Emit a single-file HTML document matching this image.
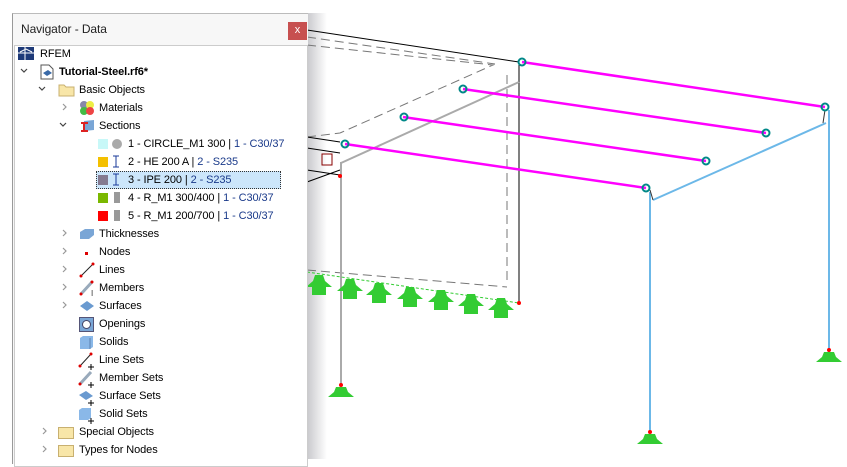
<!DOCTYPE html>
<html><head><meta charset="utf-8"><style>
body{margin:0;width:847px;height:459px;overflow:hidden;background:#fff;font-family:"Liberation Sans",sans-serif;font-size:11px;letter-spacing:-0.1px;color:#000;position:relative}
#shadow{position:absolute;left:307px;top:13px;width:20px;height:446px;background:linear-gradient(to right,#c8c8cc,#fff)}
#panel{position:absolute;left:12px;top:13px;width:295px;height:450px;background:#f7f7f7;border-left:1px solid #999;border-top:1px solid #bbb}
#title{position:absolute;left:8px;top:8px;font-size:12px;color:#222}
#close{position:absolute;left:275px;top:8px;width:19px;height:18px;background:#c75050;color:#fff;font-size:11px;text-align:center;line-height:17px}
#tree{position:absolute;left:1px;top:31px;width:292px;height:420px;background:#fff;border:1px solid #ccc}
.r{position:absolute;height:18px;line-height:18px;white-space:nowrap}
.c{color:#1a3a8a}
svg.ic{position:absolute}
</style></head><body>
<div id="shadow"></div>
<svg width="847" height="459" style="position:absolute;left:0;top:0">
<g fill="none" stroke-width="1">
<path d="M307 30 L519 62" stroke="#000"/>
<path d="M307 37 L495 64 M307 45 L493 65 L340 133 M507 75 L507 285 M307 270 L507 287 M307 137 L340 133" stroke="#777" stroke-dasharray="9 5"/>
<path d="M307 137 L340 142 M307 148 L340 153 M307 170 L340 175 M307 182 L340 170" stroke="#000"/>
<path d="M519 62 L519 303" stroke="#000"/>
<path d="M341 163 L519 82" stroke="#aaa" stroke-width="2"/>
<path d="M341 162 L341 385" stroke="#aaa" stroke-width="2"/>
<path d="M307 272 L519 303" stroke="#3c3" stroke-dasharray="3 2"/>
<path d="M522 62 L825 107 M463 89 L766 133 M403 117 L706 161 M345 144 L646 188" stroke="#f0f" stroke-width="2.5"/>
<path d="M653 200 L826 123 M829 110 L829 352 M650 192 L650 432" stroke="#6cb8e8" stroke-width="2"/>
<path d="M825 110 L823 123 M650 190 L653 200" stroke="#333"/>
<rect x="322" y="154" width="10" height="11" stroke="#800"/>
</g>
<g fill="none" stroke="#088" stroke-width="2">
<circle cx="522" cy="62" r="3.5"/><circle cx="463" cy="89" r="3.5"/><circle cx="404" cy="117" r="3.5"/><circle cx="345" cy="144" r="3.5"/>
<circle cx="825" cy="107" r="3.5"/><circle cx="766" cy="133" r="3.5"/><circle cx="706" cy="161" r="3.5"/><circle cx="646" cy="188" r="3.5"/>
</g>
<g fill="#f00"><circle cx="519" cy="303" r="2"/><circle cx="340" cy="176" r="2"/><circle cx="341" cy="385" r="2"/><circle cx="650" cy="432" r="2"/><circle cx="829" cy="350" r="2"/></g>
<g fill="#3c3">
<path d="M336 387h10l2 5 6 5h-26l6-5z"/><path d="M645 434h10l2 5 6 5h-26l6-5z"/><path d="M824 352h10l2 5 6 5h-26l6-5z"/>
<path d="M315 275h8l2 6 7 6h-26l7-6z M312 287h14v8h-14z"/>
<path d="M346 279h8l2 6 7 6h-26l7-6z M343 291h14v8h-14z"/>
<path d="M375 283h8l2 6 7 6h-26l7-6z M372 295h14v8h-14z"/>
<path d="M406 287h8l2 6 7 6h-26l7-6z M403 299h14v8h-14z"/>
<path d="M437 290h8l2 6 7 6h-26l7-6z M434 302h14v8h-14z"/>
<path d="M467 294h8l2 6 7 6h-26l7-6z M464 306h14v8h-14z"/>
<path d="M497 298h8l2 6 7 6h-26l7-6z M494 310h14v8h-14z"/>
</g>
</svg>
<div id="panel">
<div id="title">Navigator - Data</div>
<div id="close">x</div>
<div id="tree"></div>
</div>
<svg width="847" height="459" style="position:absolute;left:0;top:0" fill="none" stroke-width="1.2">
<g stroke="#444"><path d="M21 69l3 3 3-3M39 87l3 3 3-3M60 123l3 3 3-3"/></g>
<g stroke="#999"><path d="M63 104l3 3-3 3M63 230l3 3-3 3M63 248l3 3-3 3M63 266l3 3-3 3M63 284l3 3-3 3M63 302l3 3-3 3M43 428l3 3-3 3M43 446l3 3-3 3"/></g>
</svg>
<div style="position:absolute;left:0;top:0">
<svg class="ic" style="left:18px;top:47px" width="16" height="13"><rect width="16" height="13" fill="#1e3a78"/><path d="M0 6h16M7 0v13" stroke="#fff"/><path d="M2 5l6-3 6 3" stroke="#fff" fill="none"/></svg>
<div class="r" style="left:40px;top:45px">RFEM</div>
<svg class="ic" style="left:40px;top:64px" width="14" height="16"><path d="M1 1h8l4 4v10H1z" fill="#fff" stroke="#555"/><path d="M3 9l5-3 4 3-5 3z" fill="#3a6aa8"/></svg>
<div class="r" style="left:59px;top:63px;font-weight:bold">Tutorial-Steel.rf6*</div>
<svg class="ic" style="left:58px;top:83px" width="17" height="14"><path d="M1 2h5l2 2h8v9H1z" fill="#f8e6a8" stroke="#c8b070"/></svg>
<div class="r" style="left:79px;top:81px">Basic Objects</div>
<svg class="ic" style="left:79px;top:100px" width="16" height="16"><circle cx="5" cy="5" r="4" fill="#88a"/><circle cx="11" cy="5" r="4" fill="#ee4"/><circle cx="5" cy="11" r="4" fill="#4b4"/><circle cx="11" cy="11" r="4" fill="#e44"/></svg>
<div class="r" style="left:99px;top:99px">Materials</div>
<svg class="ic" style="left:80px;top:119px" width="16" height="14"><path d="M4 2l10-1v10l-10 1z" fill="#7aa6d6"/><path d="M1 4h7M4 4v8M1 12h7" stroke="#d22" stroke-width="2"/></svg>
<div class="r" style="left:99px;top:117px">Sections</div>
<div style="position:absolute;left:98px;top:139px;width:10px;height:10px;background:#c8f8f8"></div><div style="position:absolute;left:112px;top:139px;width:10px;height:10px;border-radius:50%;background:#aaa"></div>
<div class="r" style="left:128px;top:135px">1 - CIRCLE_M1 300 | <span class="c">1 - C30/37</span></div>
<div style="position:absolute;left:98px;top:157px;width:10px;height:10px;background:#f4c000"></div><svg class="ic" style="left:112px;top:155px" width="8" height="13"><path d="M1 1h6M4 1v11M1 12h6" stroke="#1a3a9a"/></svg>
<div class="r" style="left:128px;top:153px">2 - HE 200 A | <span class="c">2 - S235</span></div>
<div style="position:absolute;left:96px;top:171px;width:183px;height:16px;background:#cce6fb;border:1px dotted #333"></div>
<div style="position:absolute;left:98px;top:175px;width:10px;height:10px;background:#857a90"></div><svg class="ic" style="left:112px;top:173px" width="8" height="13"><path d="M1 1h6M4 1v11M1 12h6" stroke="#1a3a9a"/></svg>
<div class="r" style="left:128px;top:171px">3 - IPE 200 | <span class="c">2 - S235</span></div>
<div style="position:absolute;left:98px;top:193px;width:10px;height:10px;background:#7ab800"></div><div style="position:absolute;left:114px;top:192px;width:6px;height:11px;background:#999"></div>
<div class="r" style="left:128px;top:189px">4 - R_M1 300/400 | <span class="c">1 - C30/37</span></div>
<div style="position:absolute;left:98px;top:211px;width:10px;height:10px;background:#f00"></div><div style="position:absolute;left:114px;top:210px;width:6px;height:11px;background:#999"></div>
<div class="r" style="left:128px;top:207px">5 - R_M1 200/700 | <span class="c">1 - C30/37</span></div>
<svg class="ic" style="left:79px;top:228px" width="16" height="12"><path d="M1 4l5-3h9v6l-5 4H1z" fill="#7aa6d6"/></svg><div class="r" style="left:99px;top:225px">Thicknesses</div>
<div style="position:absolute;left:85px;top:252px;width:3px;height:3px;background:#d00"></div><div class="r" style="left:99px;top:243px">Nodes</div>
<svg class="ic" style="left:79px;top:262px" width="16" height="16"><path d="M2 14L14 2" stroke="#222"/><circle cx="2" cy="14" r="1.5" fill="#d00"/><circle cx="14" cy="2" r="1.5" fill="#d00"/></svg><div class="r" style="left:99px;top:261px">Lines</div>
<svg class="ic" style="left:79px;top:279px" width="18" height="18"><path d="M2 15L13 3" stroke="#9ab" stroke-width="3"/><circle cx="2" cy="15" r="1.5" fill="#d00"/><circle cx="13" cy="3" r="1.5" fill="#d00"/><text x="12" y="17" font-size="8" fill="#333">I</text></svg><div class="r" style="left:99px;top:279px">Members</div>
<svg class="ic" style="left:79px;top:300px" width="16" height="12"><path d="M1 6l7-5 7 5-7 5z" fill="#6a9ad0"/></svg><div class="r" style="left:99px;top:297px">Surfaces</div>
<svg class="ic" style="left:79px;top:317px" width="15" height="15"><rect x=".5" y=".5" width="14" height="14" fill="#7aa6d6" stroke="#557"/><circle cx="7.5" cy="7.5" r="4" fill="#fff" stroke="#446"/></svg><div class="r" style="left:99px;top:315px">Openings</div>
<svg class="ic" style="left:79px;top:335px" width="15" height="15"><path d="M1 3l3-2h10v11l-3 2H1z" fill="#8ab8e8"/><path d="M11 3v11" stroke="#5a80b0"/></svg><div class="r" style="left:99px;top:333px">Solids</div>
<svg class="ic" style="left:78px;top:352px" width="18" height="18"><path d="M2 14L13 2" stroke="#222"/><circle cx="2" cy="14" r="1.5" fill="#d00"/><circle cx="13" cy="2" r="1.5" fill="#d00"/><path d="M10 15h6M13 12v6" stroke="#000"/></svg><div class="r" style="left:99px;top:351px">Line Sets</div>
<svg class="ic" style="left:78px;top:370px" width="18" height="18"><path d="M2 14L13 2" stroke="#9ab" stroke-width="3"/><circle cx="2" cy="14" r="1.5" fill="#d00"/><path d="M10 15h6M13 12v6" stroke="#000"/></svg><div class="r" style="left:99px;top:369px">Member Sets</div>
<svg class="ic" style="left:78px;top:390px" width="18" height="16"><path d="M1 5l7-4 7 5-7 4z" fill="#6a9ad0"/><path d="M10 13h6M13 10v6" stroke="#000"/></svg><div class="r" style="left:99px;top:387px">Surface Sets</div>
<svg class="ic" style="left:78px;top:407px" width="18" height="17"><path d="M1 3l3-2h9v10l-3 2H1z" fill="#8ab8e8"/><path d="M10 14h6M13 11v6" stroke="#000"/></svg><div class="r" style="left:99px;top:405px">Solid Sets</div>
<svg class="ic" style="left:58px;top:426px" width="17" height="14"><rect x=".5" y="1.5" width="15" height="11" fill="#f8e6a8" stroke="#c8b070"/></svg><div class="r" style="left:79px;top:423px">Special Objects</div>
<svg class="ic" style="left:58px;top:444px" width="17" height="14"><rect x=".5" y="1.5" width="15" height="11" fill="#f8e6a8" stroke="#c8b070"/></svg><div class="r" style="left:79px;top:441px">Types for Nodes</div>
</div>
</body></html>
